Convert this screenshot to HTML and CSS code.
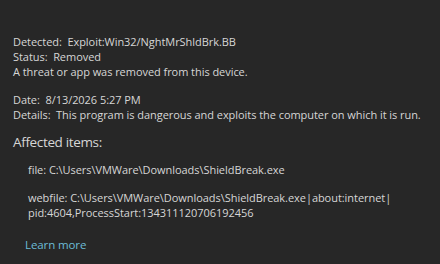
FILE: index.html
```html
<!DOCTYPE html>
<html>
<head>
<meta charset="utf-8">
<link rel="stylesheet" href="styles.css">
</head>
<body>
<div class="panel">
  <div class="group first">
    <div class="line">Detected:&nbsp; Exploit:Win32/NghtMrShldBrk.BB</div>
    <div class="line">Status:&nbsp; Removed</div>
    <div class="line">A threat or app was removed from this device.</div>
  </div>
  <div class="group">
    <div class="line">Date:&nbsp; 8/13/2026 5:27 PM</div>
    <div class="line">Details:&nbsp; This program is dangerous and exploits the computer on which it is run.</div>
  </div>
  <div class="heading">Affected items:</div>
  <div class="items">
    <div class="item">file: C:\Users\VMWare\Downloads\ShieldBreak.exe</div>
    <div class="item">webfile: C:\Users\VMWare\Downloads\ShieldBreak.exe|about:internet|<br>pid:4604,ProcessStart:134311120706192456</div>
  </div>
  <a class="link" href="#">Learn more</a>
</div>
</body>
</html>
```

FILE: styles.css
```css
html, body {
  margin: 0;
  padding: 0;
  background: #272727;
}
body {
  width: 440px;
  height: 264px;
  overflow: hidden;
  font-family: "Open Sans", "Noto Sans", sans-serif;
  font-size: 11px;
  letter-spacing: -0.05px;
  color: #d6d6d6;
}
.panel {
  padding: 34px 0 0 13px;
  display: flex;
  flex-direction: column;
}
.line {
  line-height: 15px;
  white-space: nowrap;
}
.group + .group {
  margin-top: 13px;
}
.heading {
  font-size: 13.5px;
  letter-spacing: -0.35px;
  line-height: 20px;
  margin-top: 10px;
}
.items {
  padding-left: 15px;
  display: flex;
  flex-direction: column;
  gap: 13px;
  margin-top: 10px;
}
.item {
  line-height: 15px;
}
.link {
  margin: 17px 0 0 12px;
  color: #6cbcd6;
  text-decoration: none;
  font-size: 11.5px;
  letter-spacing: -0.1px;
  line-height: 16px;
  align-self: flex-start;
}
```
